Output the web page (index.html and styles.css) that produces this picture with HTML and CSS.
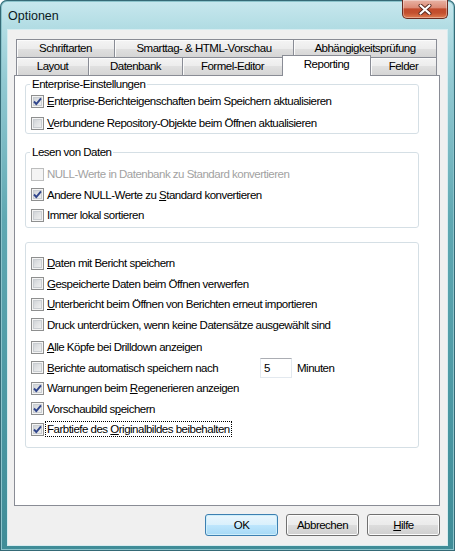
FILE: index.html
```html
<!DOCTYPE html>
<html lang="de">
<head>
<meta charset="utf-8">
<title>Optionen</title>
<link rel="stylesheet" href="styles.css">
</head>
<body>
<div class="window">
  <div class="titlebar">
    <span class="title">Optionen</span>
    <div class="close">
      <svg width="14" height="11" viewBox="0 0 14 11">
        <path d="M2.5 1.5 L11.5 9.5 M11.5 1.5 L2.5 9.5" stroke="#5a2a20" stroke-width="4" stroke-linecap="round"/>
        <path d="M2.5 1.5 L11.5 9.5 M11.5 1.5 L2.5 9.5" stroke="#ffffff" stroke-width="2.2" stroke-linecap="round"/>
      </svg>
    </div>
  </div>
  <div class="client">
    <div class="tabs">
      <div class="tabrow">
        <div class="tab t-schrift">Schriftarten</div>
        <div class="tab t-smart">Smarttag- &amp; HTML-Vorschau</div>
        <div class="tab t-abh last">Abhängigkeitsprüfung</div>
      </div>
      <div class="tabrow">
        <div class="tab t-layout">Layout</div>
        <div class="tab t-db">Datenbank</div>
        <div class="tab t-formel">Formel-Editor</div>
        <div class="tab t-rep sel">Reporting</div>
        <div class="tab t-felder last after-sel">Felder</div>
      </div>
    </div>
    <div class="panel">
      <div class="group g1">
        <span class="legend">Enterprise-Einstellungen</span>
        <div class="rows rows-g1">
          <div class="cb"><span class="box checked"><svg width="11" height="11" viewBox="0 0 11 11"><path d="M2 5.5 L4.3 8 L9 2.3" fill="none" stroke="#31468c" stroke-width="1.9"/></svg></span><span class="text"><u>E</u>nterprise-Berichteigenschaften beim Speichern aktualisieren</span></div>
          <div class="cb"><span class="box"></span><span class="text"><u>V</u>erbundene Repository-Objekte beim Öffnen aktualisieren</span></div>
        </div>
      </div>
      <div class="group g2">
        <span class="legend">Lesen von Daten</span>
        <div class="rows rows-g2">
          <div class="cb disabled"><span class="box"></span><span class="text">NULL-Werte in Datenbank zu Standard konvertieren</span></div>
          <div class="cb"><span class="box checked"><svg width="11" height="11" viewBox="0 0 11 11"><path d="M2 5.5 L4.3 8 L9 2.3" fill="none" stroke="#31468c" stroke-width="1.9"/></svg></span><span class="text">Andere NULL-Werte zu <u>S</u>tandard konvertieren</span></div>
          <div class="cb"><span class="box"></span><span class="text">Immer lokal sortieren</span></div>
        </div>
      </div>
      <div class="group g3">
        <div class="rows rows-g3">
          <div class="cb"><span class="box"></span><span class="text"><u>D</u>aten mit Bericht speichern</span></div>
          <div class="cb"><span class="box"></span><span class="text"><u>G</u>espeicherte Daten beim Öffnen verwerfen</span></div>
          <div class="cb"><span class="box"></span><span class="text"><u>U</u>nterbericht beim Öffnen von Berichten erneut importieren</span></div>
          <div class="cb"><span class="box"></span><span class="text">Druck unterdrücken, wenn keine Datensätze ausgewählt sind</span></div>
          <div class="cb spaced"><span class="box"></span><span class="text"><u>A</u>lle Köpfe bei Drilldown anzeigen</span></div>
          <div class="cb autosave"><span class="box"></span><span class="text"><u>B</u>erichte automatisch speichern nach</span><span class="input">5</span><span class="unit">Minuten</span></div>
          <div class="cb"><span class="box checked"><svg width="11" height="11" viewBox="0 0 11 11"><path d="M2 5.5 L4.3 8 L9 2.3" fill="none" stroke="#31468c" stroke-width="1.9"/></svg></span><span class="text">Warnungen beim <u>R</u>egenerieren anzeigen</span></div>
          <div class="cb"><span class="box checked"><svg width="11" height="11" viewBox="0 0 11 11"><path d="M2 5.5 L4.3 8 L9 2.3" fill="none" stroke="#31468c" stroke-width="1.9"/></svg></span><span class="text">Vorschaubild s<u>p</u>eichern</span></div>
          <div class="cb"><span class="box checked"><svg width="11" height="11" viewBox="0 0 11 11"><path d="M2 5.5 L4.3 8 L9 2.3" fill="none" stroke="#31468c" stroke-width="1.9"/></svg></span><span class="text focus">Farbtiefe des <u>O</u>riginalbildes beibehalten</span></div>
        </div>
      </div>
    </div>
    <div class="buttons">
      <div class="btn default">OK</div>
      <div class="btn">Abbrechen</div>
      <div class="btn"><u>H</u>ilfe</div>
    </div>
  </div>
</div>
</body>
</html>
```

FILE: styles.css
```css
html, body {
  margin: 0;
  padding: 0;
  background: #ffffff;
}

body {
  font-family: "Liberation Sans", Arial, sans-serif;
  font-size: 11.5px;
  letter-spacing: -0.5px;
  color: #000;
}

.window {
  width: 455px;
  height: 551px;
  box-sizing: border-box;
  border-radius: 7px 7px 0 0;
  background: linear-gradient(180deg, #c8e8ee 0px, #b3dde4 26px, #93cad3 80px, #5fa8b2 220px, #4a97a2 420px, #3f8c97 551px);
  box-shadow: inset 0 0 0 1px #356a76, inset 0 0 0 2px #8cc4cc;
  display: flex;
  flex-direction: column;
  overflow: hidden;
}

.titlebar {
  height: 30px;
  display: flex;
  justify-content: space-between;
  align-items: flex-start;
  padding-left: 8px;
}

.title {
  font-family: "Liberation Sans", Arial, sans-serif;
  font-size: 12.5px;
  letter-spacing: 0;
  line-height: 14px;
  margin-top: 9px;
  color: #0b1a1e;
}

.close {
  width: 46px;
  height: 19px;
  box-sizing: border-box;
  margin-right: 7px;
  border: 1px solid #6a2c21;
  border-top: none;
  border-radius: 0 0 5px 5px;
  background: linear-gradient(180deg, #e9b3a4 0%, #dc8c77 42%, #c24b2d 50%, #c3502f 72%, #df7c50 100%);
  box-shadow: inset 0 0 0 1px rgba(255, 255, 255, 0.35);
  display: flex;
  align-items: center;
  justify-content: center;
}

.client {
  margin: 0 8px;
  height: 515px;
  box-sizing: border-box;
  background: #f0f0f0;
  box-shadow: 0 0 0 1px #d6ecf0;
  padding: 9px 7px 0 6px;
  display: flex;
  flex-direction: column;
}

/* Tabs */
.tabs {
  padding-left: 2px;
  display: flex;
  flex-direction: column;
}

.tabrow {
  display: flex;
  align-items: flex-start;
  height: 18px;
}

.tab {
  box-sizing: border-box;
  height: 18px;
  border: 1px solid #898c95;
  border-bottom: none;
  border-right: none;
  background: linear-gradient(180deg, #f4f4f4 0%, #ececec 50%, #e0e0e0 50%, #d5d5d5 100%);
  box-shadow: inset 1px 1px 0 #fbfbfb;
  text-align: center;
  line-height: 17px;
  white-space: nowrap;
}

.tab.last {
  border-right: 1px solid #898c95;
}

.tab.after-sel {
  border-left: none;
}

.tab.sel {
  height: 21px;
  margin-top: -2px;
  background: #ffffff;
  box-shadow: none;
  border-right: 1px solid #898c95;
  line-height: 16px;
  position: relative;
  z-index: 1;
}

.t-schrift { width: 98px; }
.t-smart { width: 179px; }
.t-abh { width: 144px; }
.t-layout { width: 72px; }
.t-db { width: 94px; }
.t-formel { width: 100px; }
.t-rep { width: 89px; }
.t-felder { width: 66px; }

/* Panel */
.panel {
  height: 431px;
  box-sizing: border-box;
  border: 1px solid #898c95;
  background: #ffffff;
  padding: 8px 0 0 10px;
  display: flex;
  flex-direction: column;
}

.group {
  width: 394px;
  box-sizing: border-box;
  border: 1px solid #d5dfe5;
  border-radius: 3px;
  display: flex;
  flex-direction: column;
}

.g1 { height: 50px; }
.g2 { height: 76px; margin-top: 18px; }
.g3 { height: 206px; margin-top: 14px; padding-top: 12px; }

.legend {
  align-self: flex-start;
  margin-top: -7px;
  margin-left: 4px;
  padding: 0 2px;
  line-height: 13px;
  height: 13px;
  background: #ffffff;
  color: #000;
}

.rows {
  display: flex;
  flex-direction: column;
}

.rows-g1 { margin-top: 2px; gap: 6px; }
.rows-g2 { margin-top: 7px; gap: 4.5px; }
.rows-g3 { gap: 4.5px; }

.cb {
  display: flex;
  align-items: center;
  height: 16px;
  padding-left: 5px;
  white-space: nowrap;
}

.cb.spaced { margin-top: 2px; }

.box {
  width: 13px;
  height: 13px;
  box-sizing: border-box;
  flex: none;
  border: 1px solid #8e8f8f;
  background: linear-gradient(135deg, #c6cacf 0%, #dfe1e3 45%, #f5f5f5 100%);
  box-shadow: inset 0 0 0 1px #f4f4f4, inset 0 0 0 2px #c9cdd1;
  display: flex;
  align-items: center;
  justify-content: center;
}

.box svg {
  display: block;
}

.text {
  margin-left: 3px;
  line-height: 16px;
}

.disabled .box {
  border-color: #bcbdbd;
  background: #f4f4f4;
  box-shadow: none;
}

.disabled .text {
  color: #a2a2a2;
}

.focus {
  margin-left: 2px;
  padding: 0 1px;
  line-height: 14px;
  outline: 1px dotted #000;
}

.autosave .text {
  width: 213px;
}

.input {
  width: 32px;
  height: 20px;
  margin: -2px 0;
  box-sizing: border-box;
  border: 1px solid #e3e9ef;
  border-top-color: #abadb3;
  background: #fff;
  padding-left: 3px;
  line-height: 18px;
}

.unit {
  margin-left: 5px;
}

/* Buttons */
.buttons {
  margin-top: 8px;
  display: flex;
  justify-content: flex-end;
  gap: 8px;
}

.btn {
  width: 73px;
  height: 22px;
  box-sizing: border-box;
  border: 1px solid #707070;
  border-radius: 3px;
  background: linear-gradient(180deg, #f2f2f2 0%, #ebebeb 50%, #dddddd 50%, #cfcfcf 100%);
  box-shadow: inset 0 0 0 1px #fcfcfc;
  text-align: center;
  line-height: 20px;
}

.btn.default {
  border-color: #3c7fb1;
  background: linear-gradient(180deg, #eaf6fd 0%, #d9f0fc 50%, #bee6fd 50%, #a7d9f5 100%);
  box-shadow: inset 0 0 0 1px #cdeefb;
}
```
